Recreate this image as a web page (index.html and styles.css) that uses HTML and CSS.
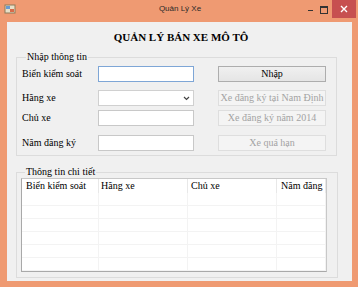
FILE: index.html
```html
<!DOCTYPE html>
<html lang="vi">
<head>
    <meta charset="UTF-8">
    <title>Quản Lý Xe</title>
    <link rel="stylesheet" href="styles.css">
</head>
<body>
    <div class="window">
        <div class="titlebar">
            <svg class="app-icon" width="12" height="12" viewBox="0 0 12 12">
                <rect x="1" y="2" width="10" height="8" fill="#e8e0c8" stroke="#8c7a5a" stroke-width="1"/>
                <rect x="2" y="3" width="4" height="3" fill="#6a9ad0"/>
                <rect x="6" y="6" width="4" height="3" fill="#d86a4a"/>
            </svg>
            <div class="title">Quản Lý Xe</div>
            <div class="controls">
                <span class="ctl min"></span>
                <span class="ctl max"></span>
                <span class="close">
                    <svg width="8" height="8" viewBox="0 0 8 8"><path d="M1 1L7 7M7 1L1 7" stroke="#fff" stroke-width="1.4"/></svg>
                </span>
            </div>
        </div>

        <div class="client">
            <h1 class="heading">QUẢN LÝ BÁN XE MÔ TÔ</h1>

            <fieldset class="group input-group">
                <legend>Nhập thông tin</legend>
                <div class="form-grid">
                    <label>Biển kiểm soát</label>
                    <input class="textbox focused" type="text">
                    <button class="btn">Nhập</button>

                    <label>Hãng xe</label>
                    <div class="textbox combo">
                        <svg class="arrow" width="7" height="5" viewBox="0 0 7 5"><path d="M1 1L3.5 3.5L6 1" fill="none" stroke="#444" stroke-width="1.2"/></svg>
                    </div>
                    <button class="btn" disabled>Xe đăng ký tại Nam Định</button>

                    <label>Chủ xe</label>
                    <input class="textbox" type="text">
                    <button class="btn" disabled>Xe đăng ký năm 2014</button>

                    <label>Năm đăng ký</label>
                    <input class="textbox" type="text">
                    <button class="btn" disabled>Xe quá hạn</button>
                </div>
            </fieldset>

            <fieldset class="group detail-group">
                <legend>Thông tin chi tiết</legend>
                <div class="listview">
                    <div class="lv-row lv-header">
                        <span class="col c1">Biển kiểm soát</span>
                        <span class="col c2">Hãng xe</span>
                        <span class="col c3">Chủ xe</span>
                        <span class="col c4">Năm đăng</span>
                    </div>
                    <div class="lv-row"><span class="col c1"></span><span class="col c2"></span><span class="col c3"></span><span class="col c4"></span></div>
                    <div class="lv-row"><span class="col c1"></span><span class="col c2"></span><span class="col c3"></span><span class="col c4"></span></div>
                    <div class="lv-row"><span class="col c1"></span><span class="col c2"></span><span class="col c3"></span><span class="col c4"></span></div>
                    <div class="lv-row"><span class="col c1"></span><span class="col c2"></span><span class="col c3"></span><span class="col c4"></span></div>
                    <div class="lv-row"><span class="col c1"></span><span class="col c2"></span><span class="col c3"></span><span class="col c4"></span></div>
                    <div class="lv-row"><span class="col c1"></span><span class="col c2"></span><span class="col c3"></span><span class="col c4"></span></div>
                </div>
            </fieldset>
        </div>
    </div>
</body>
</html>
```

FILE: styles.css
```css
* {
    box-sizing: border-box;
}
body {
    margin: 0;
    font-family: 'Liberation Serif', 'Times New Roman', serif;
    font-size: 10px;
    color: #000;
}
.window {
    width: 358px;
    height: 287px;
    background-color: #ef9a72;
    padding: 0 6px 6px 7px;
    display: flex;
    flex-direction: column;
}
.titlebar {
    height: 22px;
    display: grid;
    grid-template-columns: 1fr auto 1fr;
    align-items: start;
}
.app-icon {
    margin: 3px 0 0 -3px;
}
.title {
    font-family: 'Liberation Sans', Arial, sans-serif;
    font-size: 8px;
    line-height: 17px;
    color: #2a2a2a;
    padding-left: 1px;
}
.controls {
    display: flex;
    justify-content: flex-end;
    align-items: flex-start;
    margin-right: -4px;
}
.ctl {
    width: 13px;
    height: 17px;
    position: relative;
}
.min::after {
    content: '';
    position: absolute;
    left: 4px;
    top: 10px;
    width: 5px;
    height: 1px;
    background: #333;
}
.max::after {
    content: '';
    position: absolute;
    left: 3px;
    top: 6px;
    width: 6px;
    height: 5px;
    border: 1px solid #333;
    border-top-width: 2px;
}
.close {
    width: 24px;
    height: 18px;
    margin-left: 2px;
    background-color: #c75050;
    display: flex;
    align-items: center;
    justify-content: center;
}
.client {
    flex: 1;
    background-color: #f0f0f0;
    padding: 0 0 0 9px;
}
.heading {
    margin: 0;
    padding-top: 8px;
    height: 29px;
    font-size: 11px;
    line-height: 14px;
    font-weight: bold;
    text-align: center;
    padding-right: 6px;
}
.group {
    width: 321px;
    margin: 0;
    border: 1px solid #dcdcdc;
    padding: 0;
}
.group legend {
    padding: 0 1px;
    margin-left: 4px;
    line-height: 12px;
    font-size: 10px;
}
.input-group {
    padding: 3px 10px 4px 5px;
}
.form-grid {
    display: grid;
    grid-template-columns: 76px 96px 108px;
    grid-template-rows: 24px 20px 25px 16px;
}
.form-grid label {
    line-height: 16px;
    height: 16px;
}
.form-grid .btn {
    margin-left: 24px;
}
.textbox {
    width: 96px;
    height: 16px;
    border: 1px solid #c8c8c8;
    background: #fff;
    padding: 0;
    margin: 0;
    font: inherit;
}
.textbox.focused {
    border-color: #7ea6d6;
}
.combo {
    border-color: #d0d0d0;
    display: flex;
    justify-content: flex-end;
    align-items: center;
    padding-right: 3px;
}
.btn {
    width: 108px;
    height: 16px;
    padding: 0;
    font: inherit;
    line-height: 14px;
    color: #000;
    border: 1px solid #adadad;
    background: linear-gradient(#f0f0f0, #e5e5e5);
}
.btn:disabled {
    color: #a3a3a3;
    border-color: #dedede;
    background: #f4f4f4;
}
.detail-group {
    margin-top: 10px;
    padding: 0 10px 5px 4px;
}
.listview {
    width: 306px;
    height: 94px;
    border: 1px solid #a9a9a9;
    border-top-color: #c8c8c8;
    border-right-color: #c8c8c8;
    background: #fff;
    overflow: hidden;
}
.lv-row {
    display: flex;
    height: 13px;
    border-bottom: 1px solid #f3f3f3;
    white-space: nowrap;
}
.lv-header {
    height: 14px;
    border-bottom: none;
    line-height: 13px;
}
.col {
    flex: none;
    overflow: hidden;
    border-right: 1px solid #f3f3f3;
}
.lv-header .col {
    border-right-color: #e8e8e8;
    padding-left: 4px;
}
.c1 { width: 77px; }
.c2 { width: 89px; }
.c3 { width: 89px; }
.c4 { width: 49px; }
.lv-header .c2 { padding-left: 2px; }
.lv-header .c3 { padding-left: 3px; }
```
